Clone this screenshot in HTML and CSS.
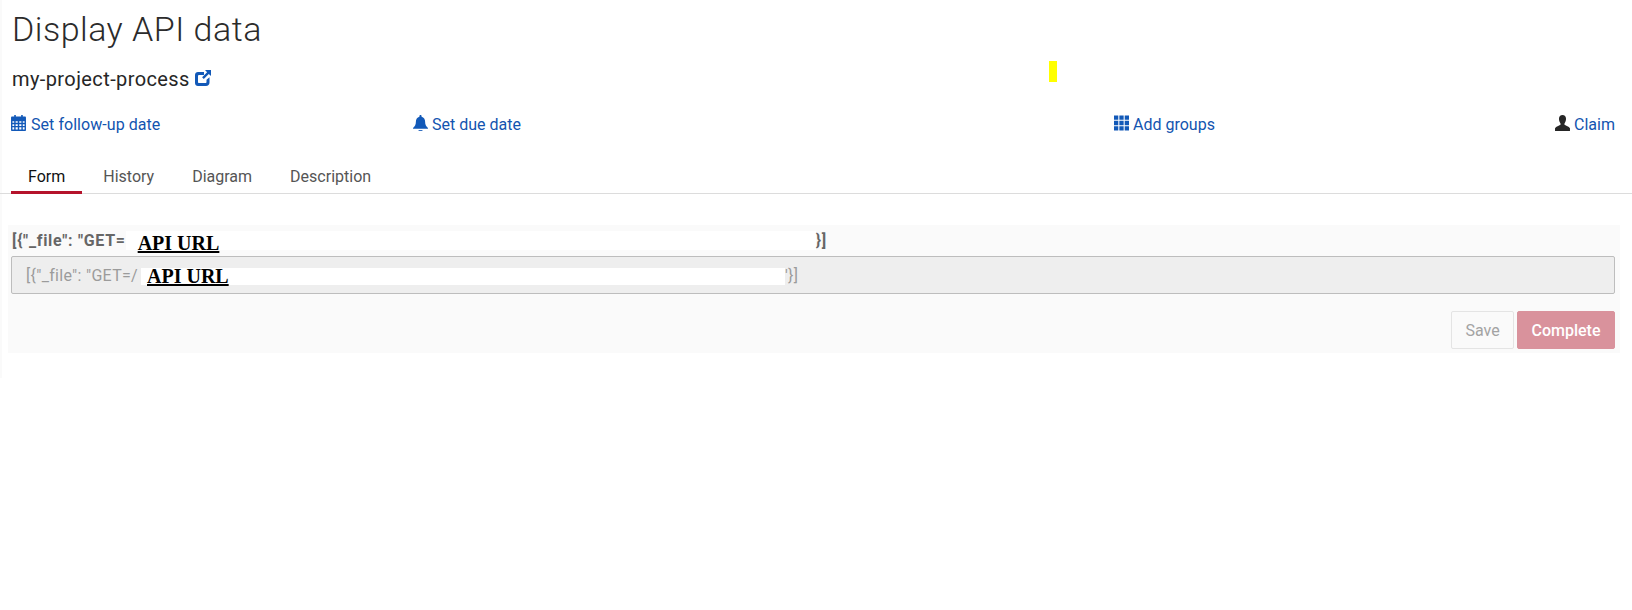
FILE: index.html
```html
<!DOCTYPE html>
<html lang="en">
<head>
<meta charset="UTF-8" />
<meta name="viewport" content="width=device-width, initial-scale=1" />
<title>Display API data</title>
<link rel="stylesheet" href="styles.css">
</head>
<body>
  <div class="task">
    <h1>Display API data</h1>
    <div class="process">
      <span>my-project-process</span>
      <svg class="ico-link" viewBox="0 0 16 16"><path d="M3 2h6v3H4a1 1 0 0 0-1 1v6c0 .6.4 1 1 1h6.500c.6 0 1-.4 1-1V9.800l3-2.600v5.300c0 2-1.400 3.500-3.500 3.500H3c-1.700 0-3-1.300-3-3V5c0-1.700 1.300-3 3-3z"/><path d="M10 0h6v6l-2.200-2.100-5 5-1.700-1.700 5-5z"/></svg>
    </div>
    <span class="marker"></span>

    <div class="actions">
      <a class="action">
        <svg class="ico" viewBox="0 0 14 15"><path fill-rule="evenodd" d="M3 0h1.500v1.500h5V0H11v1.500h2c.6 0 1 .4 1 1V14c0 .6-.4 1-1 1H1c-.6 0-1-.4-1-1V2.500c0-.6.4-1 1-1h2zM1.300 5.800v1.500H3V5.800zM4.300 5.800v1.500h2V5.800zM7.700 5.800v1.500h2V5.800zM11 5.800v1.500h1.700V5.800zM1.300 8.600v1.600H3V8.600zM4.300 8.600v1.600h2V8.600zM7.700 8.600v1.600h2V8.600zM11 8.600v1.600h1.700V8.600zM1.300 11.500v2H3v-2zM4.300 11.500v2h2v-2zM7.700 11.500v2h2v-2zM11 11.500v2h1.700v-2z"/></svg>
        Set follow-up date
      </a>
      <a class="action">
        <svg class="ico" viewBox="0 0 14 15"><path d="M7 0c.6 0 1 .4 1 1v.6c2.200.5 3.300 2.300 3.300 4.600 0 3.300 1.100 4.600 2.700 6.100v.7H0v-.7c1.600-1.500 2.700-2.800 2.700-6.100C2.700 3.900 3.800 2.100 6 1.600V1c0-.6.4-1 1-1z"/><path d="M5.200 14.200h3.600v.8H5.200z"/></svg>
        Set due date
      </a>
      <a class="action">
        <svg class="ico" viewBox="0 0 14 14"><path d="M0 0h4v4H0zM5 0h4v4H5zM10 0h4v4h-4zM0 5h4v4H0zM5 5h4v4H5zM10 5h4v4h-4zM0 10h4v4H0zM5 10h4v4H5zM10 10h4v4h-4z"/></svg>
        Add groups
      </a>
      <a class="action">
        <svg class="ico ico-user" viewBox="0 0 14 15"><path d="M7 0c2 0 3.300 1.500 3.300 3.600 0 1.600-.5 3.200-1.400 4.300-.3.4-.3 1 .1 1.300 1.300.9 4 1.500 5 3.300V15H0v-2.500c1-1.800 3.700-2.400 5-3.300.4-.3.4-.9.1-1.300C4.200 6.800 3.700 5.200 3.700 3.600 3.700 1.500 5 0 7 0z"/></svg>
        Claim
      </a>
    </div>

    <ul class="tabs">
      <li class="tab active">Form</li>
      <li class="tab">History</li>
      <li class="tab">Diagram</li>
      <li class="tab">Description</li>
    </ul>

    <form class="form">
      <label class="field-label">[{"_file": "GET=<span class="mask mask-label"><b>API URL</b></span><span>}]</span></label>
      <div class="field">[{"_file": "GET=/<span class="mask mask-input"><b>API URL</b></span><span>'}]</span></div>
      <div class="buttons">
        <button type="button" class="btn btn-save" disabled>Save</button>
        <button type="button" class="btn btn-complete" disabled>Complete</button>
      </div>
    </form>
  </div>
</body>
</html>
```

FILE: styles.css
```css
* {
  box-sizing: border-box;
}
html, body {
  margin: 0;
  padding: 0;
}
body {
  font-family: Roboto, "Noto Sans", sans-serif;
  background: #fff;
  color: #262626;
  height: 610px;
  overflow: hidden;
}
.task {
  position: relative;
  height: 378px;
  border-left: 2px solid #fafafa;
  padding: 0 0 0 6px;
}
h1 {
  margin: 0;
  padding: 9px 0 0 4px;
  height: 58px;
  font-size: 34px;
  font-weight: 300;
  line-height: 40px;
  color: #2b2b2b;
  letter-spacing: 0.5px;
}
.process {
  display: flex;
  align-items: center;
  gap: 5px;
  height: 42px;
  padding-left: 4px;
  font-size: 20px;
  letter-spacing: 0.4px;
  color: #262626;
}
.ico-link {
  width: 16px;
  height: 16px;
  fill: #1259b8;
  margin-top: -3px;
}
.marker {
  position: absolute;
  left: 1047px;
  top: 61px;
  width: 8px;
  height: 21px;
  background: #ffff00;
}
.actions {
  display: grid;
  grid-template-columns: 402px 701px 1fr auto;
  height: 40px;
  margin-top: 4px;
  padding: 0 17px 0 3px;
  align-items: center;
}
.action {
  display: flex;
  align-items: center;
  gap: 4px;
  font-size: 16px;
  color: #1254b0;
  white-space: nowrap;
}
.action:first-child {
  gap: 5px;
  letter-spacing: 0.05px;
}
.ico {
  width: 15px;
  height: 16px;
  fill: #1259b8;
  margin-top: -3px;
}
.ico-user {
  fill: #262626;
}
.tabs {
  display: flex;
  list-style: none;
  margin: 12px 0 0 -8px;
  padding: 0 0 0 11px;
  height: 38px;
  border-bottom: 1px solid #dcdcdc;
}
.tab {
  height: 38px;
  padding: 11px 17px 0;
  margin-right: 4px;
  font-size: 16px;
  color: #555;
}
.tab.active {
  color: #111;
  border-bottom: 3px solid #b5132b;
}
.form {
  width: 1612px;
  height: 128px;
  margin-top: 31px;
  padding: 6px 5px 0 3px;
  background: #fafafa;
}
.field-label {
  display: flex;
  align-items: flex-start;
  height: 25px;
  padding-left: 1px;
  font-size: 16px;
  font-weight: 700;
  letter-spacing: 0.7px;
  color: #666;
}
.mask {
  background: #fff;
  font-family: "Liberation Serif", serif;
  color: #000;
  letter-spacing: 0;
}
.mask b {
  font-size: 20px;
  line-height: 24px;
  text-decoration: underline;
}
.mask-label {
  width: 690px;
  height: 19px;
  padding-left: 12px;
}
.field {
  display: flex;
  align-items: center;
  height: 38px;
  padding: 0 14px;
  background: #eee;
  border: 1px solid #bdbdbd;
  border-radius: 2px;
  font-size: 16px;
  letter-spacing: 0.3px;
  color: #9b9b9b;
}
.mask-input {
  width: 644px;
  height: 17px;
  margin-left: 3px;
  margin-top: 3px;
  padding-left: 6px;
}
.mask-input b {
  line-height: 17px;
}
.buttons {
  display: flex;
  justify-content: flex-end;
  gap: 3px;
  margin-top: 17px;
}
.btn {
  height: 38px;
  padding: 0 13px;
  border-radius: 2px;
  font-family: inherit;
  font-size: 16px;
}
.btn-save {
  width: 63px;
  background: #fafafa;
  border: 1px solid #e4e4e4;
  color: #a3a3a3;
}
.btn-complete {
  width: 98px;
  background: #d9929c;
  border: 1px solid #d9929c;
  color: #fff;
  font-weight: 500;
}
```
